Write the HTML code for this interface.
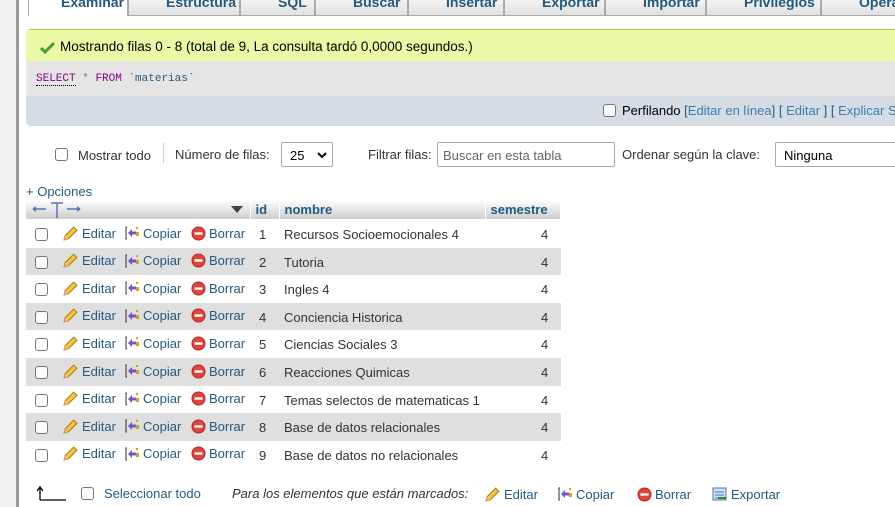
<!DOCTYPE html>
<html><head><meta charset="utf-8"><style>
*{box-sizing:border-box;margin:0;padding:0}
body{width:895px;height:507px;overflow:hidden;background:#fff;font-family:"Liberation Sans",Arial,sans-serif;font-size:13px;color:#000;position:relative}
.a{position:absolute;white-space:nowrap}
.f{display:flex;align-items:center;height:16px}
.lnk{color:#235a81}
.tab{position:absolute;top:-2px;height:18px;background:linear-gradient(#f6f6f6,#e0e0e0);border:1px solid #aaa;border-top:none;font-weight:bold;font-size:14px;color:#235a81;padding:0 0 0 37px;line-height:8px;overflow:hidden}
.cb{position:absolute;width:13px;height:13px;border:1px solid #767676;border-radius:3px;background:#fff}
table{position:absolute;left:26px;top:200px;border-collapse:collapse;width:535px}
th{height:19px;background:linear-gradient(#fff,#ccc);text-align:left;color:#235a81;font-weight:bold;border-right:1px solid #fff;padding:0 5px;font-size:13px}
.ico{display:inline-block;margin-right:3px;flex:none}
</style></head><body>
<div class="a" style="left:0;top:0;width:19px;height:507px;background:#f0f0f0;border-right:3px solid #9b9b9b"></div>
<div class="tab" style="left:28px;width:100px;background:#fff;border-bottom:none;padding-left:32px">Examinar</div>
<div class="tab" style="left:128px;width:112px">Estructura</div>
<div class="tab" style="left:240px;width:75px">SQL</div>
<div class="tab" style="left:315px;width:93px">Buscar</div>
<div class="tab" style="left:408px;width:96px">Insertar</div>
<div class="tab" style="left:504px;width:101px">Exportar</div>
<div class="tab" style="left:605px;width:101px">Importar</div>
<div class="tab" style="left:706px;width:115px">Privilegios</div>
<div class="tab" style="left:821px;width:90px">Operaciones</div>

<div class="a" style="left:26px;top:29px;width:880px;height:97px;background:#d5dce3;border-radius:5px;overflow:hidden">
<div style="height:32px;background:#ebf8a4;border-top:1px solid #a2d246;padding:9px 0 0 34px;font-size:13.5px;position:relative"><svg style="position:absolute;left:14px;top:12px" width="15" height="12" viewBox="0 0 15 12"><path d="M1 6l4 4 9-9" stroke="#4a9d35" stroke-width="3" fill="none"/></svg>Mostrando filas 0 - 8 (total de 9, La consulta tardó 0,0000 segundos.)</div>
<div style="height:35px;background:#e5e5e5;padding:12px 0 0 10px;font-family:'Liberation Mono',monospace;font-size:11px"><span style="color:#808;border-bottom:1px dotted #000">SELECT</span> <span style="color:#777">*</span> <span style="color:#808">FROM</span> <span style="color:#235a81">`materias`</span></div>
</div>
<div class="cb" style="left:603px;top:104px"></div>
<div class="a" style="left:622px;top:103px">Perfilando <span class="lnk">[<span style="color:#3a7ead">Editar en línea</span>] [ <span style="color:#3a7ead">Editar</span> ] [ <span style="color:#3a7ead">Explicar SQL</span></span></div>

<div class="cb" style="left:55px;top:148px"></div>
<div class="a" style="left:78px;top:148px;color:#333">Mostrar todo</div>
<div class="a" style="left:163px;top:143px;width:1px;height:20px;background:#ccc"></div>
<div class="a" style="left:175px;top:147px;color:#333">Número de filas:</div>
<div class="a" style="left:281px;top:142px;width:52px;height:25px;border:1px solid #aaa;border-radius:2px;padding:5px 0 0 8px">25 <svg style="position:absolute;right:5px;top:9px" width="10" height="7"><path d="M1 1l4 4 4-4" stroke="#000" stroke-width="2" fill="none"/></svg></div>
<div class="a" style="left:368px;top:147px;color:#333">Filtrar filas:</div>
<div class="a" style="left:437px;top:142px;width:178px;height:25px;border:1px solid #aaa;border-radius:2px;padding:5px 0 0 5px;color:#666">Buscar en esta tabla</div>
<div class="a" style="left:622px;top:147px;color:#333">Ordenar según la clave:</div>
<div class="a" style="left:775px;top:142px;width:130px;height:25px;border:1px solid #aaa;border-radius:2px;padding:5px 0 0 8px">Ninguna</div>

<div class="a lnk" style="left:26px;top:184px">+ Opciones</div>

<table>
<tr><th style="width:224px;position:relative"><svg style="position:absolute;left:5px;top:1px" width="52" height="18"><path d="M2 8h13M2 8l3-2M2 8l3 2M36 8h13M49 8l-3-2M49 8l-3 2M20 2h12M26 2v15" stroke="#5a72b0" stroke-width="1.5" fill="none"/></svg><svg style="position:absolute;left:205px;top:6px" width="12" height="7"><path d="M0 0h12l-6 7z" fill="#444"/></svg></th><th style="width:29px">id</th><th style="width:206px">nombre</th><th>semestre</th></tr>
</table>
<div id="rows"></div>
<script>
var n=["Recursos Socioemocionales 4","Tutoria","Ingles 4","Conciencia Historica","Ciencias Sociales 3","Reacciones Quimicas","Temas selectos de matematicas 1","Base de datos relacionales","Base de datos no relacionales"];
var pen='<svg class="ico" width="17" height="17" viewBox="0 0 16 16"><path d="M2 14l1-4 8-8 3 3-8 8z" fill="#f3c83b" stroke="#b07a18"/><path d="M2 14l1-4 3 3z" fill="#e8b88a"/></svg>';
var cp='<svg class="ico" width="16" height="16" viewBox="0 0 16 16"><path d="M3 2h-1v12h1" stroke="#333" fill="none"/><path d="M4 8l4-4v8z" fill="#6a5acd"/><rect x="7" y="6.5" width="5" height="3" fill="#6a5acd"/><rect x="12" y="2" width="2" height="2" fill="#e0a000"/><rect x="12" y="7" width="3" height="4" fill="#e0a000"/></svg>';
var dl='<svg class="ico" width="15" height="15" viewBox="0 0 15 15"><circle cx="7.5" cy="7.5" r="6.5" fill="#e0453b" stroke="#b22"/><rect x="3.5" y="6.3" width="8" height="2.4" fill="#fff"/></svg>';
var h='';
for(var i=0;i<9;i++){var y=220+i*27.6;
h+='<div class="a" style="left:26px;top:'+y+'px;width:535px;height:27.6px;background:'+(i%2?'#dfdfdf':'#fff')+'"></div>';
h+='<div class="cb" style="left:35px;top:'+(y+8)+'px"></div>';
h+='<div class="a lnk f" style="left:62px;top:'+(y+5)+'px">'+pen+'Editar</div>';
h+='<div class="a lnk f" style="left:124px;top:'+(y+5)+'px">'+cp+'Copiar</div>';
h+='<div class="a lnk f" style="left:191px;top:'+(y+5)+'px">'+dl+'Borrar</div>';
h+='<div class="a" style="left:259px;top:'+(y+7)+'px;color:#333">'+(i+1)+'</div>';
h+='<div class="a" style="left:284px;top:'+(y+7)+'px;color:#333">'+n[i]+'</div>';
h+='<div class="a" style="left:541px;top:'+(y+7)+'px;color:#333">4</div>';}
document.getElementById('rows').innerHTML=h;
</script>
<svg class="a" style="left:36px;top:485px" width="32" height="16"><path d="M4 15V3M1 6l3-4 3 4M4 15h26" stroke="#000" fill="none" stroke-width="1.3"/></svg>
<div class="cb" style="left:81px;top:487px"></div>
<div class="a lnk" style="left:104px;top:486px">Seleccionar todo</div>
<div class="a" style="left:232px;top:486px;font-style:italic;color:#333">Para los elementos que están marcados:</div>
<div class="a lnk f" style="left:484px;top:486px"><span id="p1" style="display:flex"></span>Editar</div>
<div class="a lnk f" style="left:557px;top:486px"><span id="p2" style="display:flex"></span>Copiar</div>
<div class="a lnk f" style="left:637px;top:486px"><span id="p3" style="display:flex"></span>Borrar</div>
<div class="a lnk f" style="left:712px;top:486px"><svg class="ico" width="16" height="15" viewBox="0 0 16 15"><rect x="1" y="1" width="13" height="12" fill="#cfe0f0" stroke="#4a7ab0"/><path d="M3 5h9M3 8h9M3 11h9" stroke="#4a7ab0"/><path d="M6 11h8" stroke="#2a8a2a" stroke-width="2"/></svg>Exportar</div>
<script>document.getElementById('p1').innerHTML=pen;document.getElementById('p2').innerHTML=cp;document.getElementById('p3').innerHTML=dl;</script>
</body></html>
